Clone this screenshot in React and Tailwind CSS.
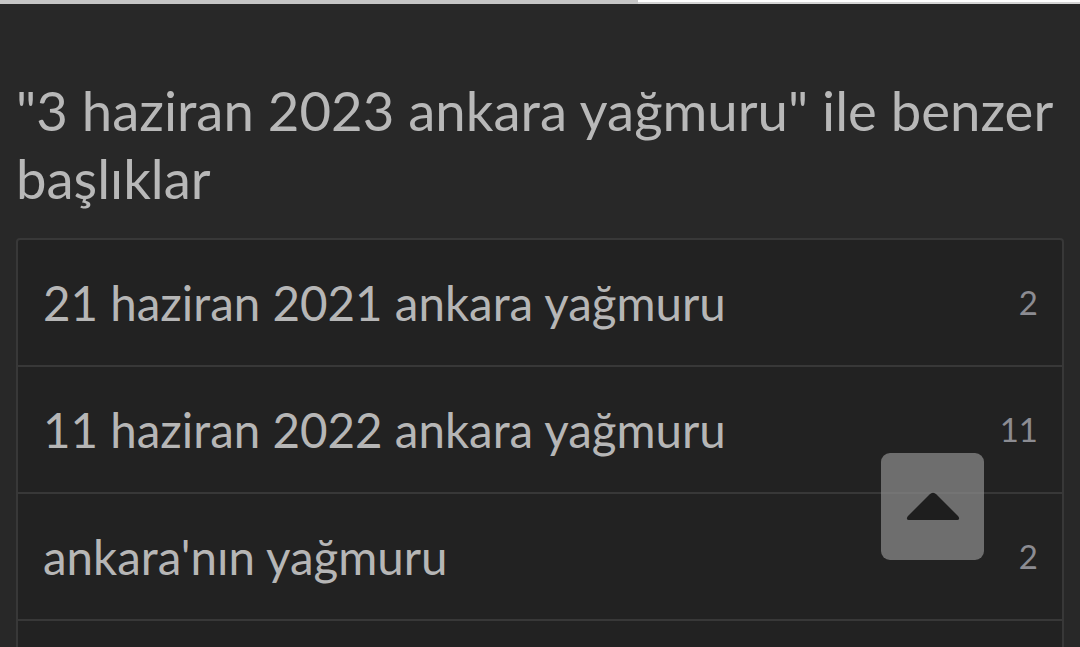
const ITEMS = [
  { title: "21 haziran 2021 ankara yağmuru", count: 2 },
  { title: "11 haziran 2022 ankara yağmuru", count: 11 },
  { title: "ankara'nın yağmuru", count: 2 },
];

export default function App() {
  return (
    <div
      className="relative h-[647px] overflow-hidden bg-[#282828]"
      style={{ fontFamily: "Lato, 'Noto Sans', sans-serif" }}
    >
      {/* top progress strip */}
      <div className="flex h-[4px]">
        <div className="w-[638px] bg-[#c6c6c6]" />
        <div className="flex-1 border-t-2 border-white bg-[#d4d4d4]" />
      </div>

      <div className="px-4 pt-[72px]">
        <h1 className="text-[54.5px] leading-[68px] text-[#b8b8b8]">
          "3 haziran 2023 ankara yağmuru" ile benzer başlıklar
        </h1>

        <ul className="mt-[26px] rounded-[4px] border-2 border-[#383838] bg-[#222222]">
          {ITEMS.map((item, i) => (
            <li
              key={i}
              className="flex h-[127px] items-center justify-between border-b-2 border-[#383838] pl-[25px] pr-[24px]"
            >
              <span className="text-[47.5px] text-[#b6b6b6]">{item.title}</span>
              <span className="text-[33px] text-[#8c8c92]">{item.count}</span>
            </li>
          ))}
          {/* next row, cut off by the screen edge */}
          <li className="h-[127px]" />
        </ul>
      </div>

      {/* scroll to top */}
      <button className="absolute left-[881px] top-[453px] flex h-[107px] w-[103px] items-center justify-center rounded-[9px] bg-[#888888]/75">
        <svg width="56" height="32" viewBox="0 0 56 32">
          <path
            d="M24.5 3.5 Q28 0 31.5 3.5 L53 25 Q56 29 51 29 L5 29 Q0 29 3 25 Z"
            fill="#1e1e1e"
          />
        </svg>
      </button>
    </div>
  );
}
